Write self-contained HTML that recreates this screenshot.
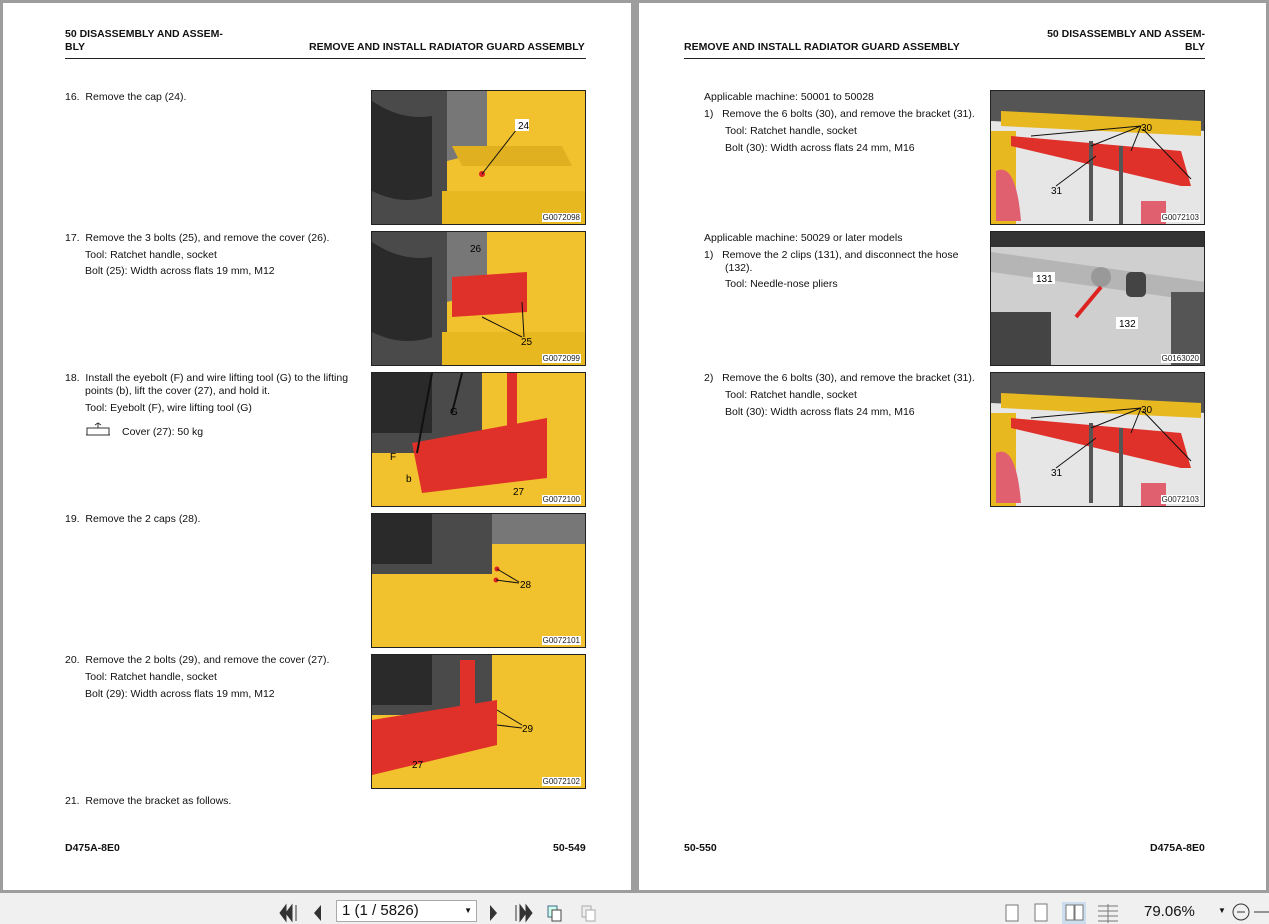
<!DOCTYPE html>
<html><head><meta charset="utf-8"><style>
*{margin:0;padding:0;box-sizing:border-box}
body{width:1269px;height:924px;background:#9d9d9d;position:relative;overflow:hidden;font-family:"Liberation Sans",sans-serif;color:#111}
.pg{position:absolute;top:3px;height:887px;background:#fff}
.t{position:absolute;font-size:10.5px;line-height:16px;white-space:nowrap;margin-top:2px}
.h{position:absolute;font-size:10.5px;font-weight:bold;line-height:13px}
.im{position:absolute;width:215px;height:135px;border:1px solid #222;overflow:hidden}
.im svg{display:block}
.cap{position:absolute;right:4px;bottom:2px;font-size:8px;background:#fff;padding:0 1px;color:#222}
.rule{position:absolute;height:1px;background:#222}
.tb{position:absolute;left:0;top:893px;width:1269px;height:31px;background:#f0f0f0}
</style></head><body>
<div class="pg" style="left:3px;width:628px"></div>
<div class="pg" style="left:639px;width:627px"></div>

<div class="h" style="left:65px;top:28px">50 DISASSEMBLY AND ASSEM-<br>BLY</div>
<div class="h" style="left:309px;top:41px">REMOVE AND INSTALL RADIATOR GUARD ASSEMBLY</div>
<div class="rule" style="left:65px;top:58px;width:521px"></div>

<div class="t" style="left:65px;top:87px">16.&nbsp; Remove the cap (24).</div>
<div class="t" style="left:65px;top:228px">17.&nbsp; Remove the 3 bolts (25), and remove the cover (26).</div>
<div class="t" style="left:85px;top:245px">Tool: Ratchet handle, socket</div>
<div class="t" style="left:85px;top:261px">Bolt (25): Width across flats 19 mm, M12</div>
<div class="t" style="left:65px;top:368px">18.&nbsp; Install the eyebolt (F) and wire lifting tool (G) to the lifting</div>
<div class="t" style="left:85px;top:381px">points (b), lift the cover (27), and hold it.</div>
<div class="t" style="left:85px;top:398px">Tool: Eyebolt (F), wire lifting tool (G)</div>
<svg style="position:absolute;left:85px;top:422px" width="26" height="14"><path d="M1 13h24M2 13V6h22v7M13 1v5M10 3l3-2 3 2" fill="none" stroke="#333" stroke-width="1"/></svg>
<div class="t" style="left:122px;top:422px">Cover (27): 50 kg</div>
<div class="t" style="left:65px;top:509px">19.&nbsp; Remove the 2 caps (28).</div>
<div class="t" style="left:65px;top:650px">20.&nbsp; Remove the 2 bolts (29), and remove the cover (27).</div>
<div class="t" style="left:85px;top:667px">Tool: Ratchet handle, socket</div>
<div class="t" style="left:85px;top:684px">Bolt (29): Width across flats 19 mm, M12</div>
<div class="t" style="left:65px;top:791px">21.&nbsp; Remove the bracket as follows.</div>
<div class="h" style="left:65px;top:842px">D475A-8E0</div>
<div class="h" style="left:553px;top:842px">50-549</div>

<div class="im" style="left:371px;top:90px"><svg width="215" height="135"><rect width="215" height="135" fill="#f2c12e"/><path d="M0 0h75v135H0z" fill="#4a4a4a"/><path d="M0 10q30 20 60 15v80q-30 10-60-5z" fill="#2a2a2a"/><path d="M75 0l40 0 0 60-40 10z" fill="#777"/><path d="M80 55h110l10 20H90z" fill="#e0b020"/><path d="M70 100h145v35H70z" fill="#e8b820"/><circle cx="110" cy="83" r="3" fill="#d22"/><path d="M110 83l35-45" stroke="#111"/><rect x="143" y="28" width="14" height="12" fill="#fff"/><text x="146" y="38" font-size="10" font-family="Liberation Sans">24</text></svg><div class="cap">G0072098</div></div>
<div class="im" style="left:371px;top:231px"><svg width="215" height="135"><rect width="215" height="135" fill="#f2c12e"/><path d="M0 0h75v135H0z" fill="#4a4a4a"/><path d="M0 10q30 20 60 15v80q-30 10-60-5z" fill="#2a2a2a"/><path d="M75 0h40v60l-40 10z" fill="#777"/><path d="M80 45l75-5v40l-75 5z" fill="#e0302a"/><path d="M70 100h145v35H70z" fill="#e8b820"/><path d="M110 85l40 20M150 70l2 35" stroke="#111"/><text x="98" y="20" font-size="10" font-family="Liberation Sans">26</text><text x="149" y="113" font-size="10" font-family="Liberation Sans">25</text></svg><div class="cap">G0072099</div></div>
<div class="im" style="left:371px;top:372px"><svg width="215" height="135"><rect width="215" height="135" fill="#f2c12e"/><path d="M0 0h110v80H0z" fill="#4a4a4a"/><path d="M0 0h60v60H0z" fill="#2a2a2a"/><path d="M40 70l135-25v60L50 120z" fill="#e0302a"/><path d="M135 0h10v60h-10z" fill="#e0302a"/><path d="M60 0l-15 80M90 0l-10 40" stroke="#111" stroke-width="2"/><text x="78" y="42" font-size="10" font-family="Liberation Sans">G</text><text x="18" y="87" font-size="10" font-family="Liberation Sans">F</text><text x="34" y="109" font-size="10" font-family="Liberation Sans">b</text><text x="141" y="122" font-size="10" font-family="Liberation Sans">27</text></svg><div class="cap">G0072100</div></div>
<div class="im" style="left:371px;top:513px"><svg width="215" height="135"><rect width="215" height="135" fill="#f2c12e"/><path d="M0 0h120v60H0z" fill="#4a4a4a"/><path d="M0 0h60v50H0z" fill="#2a2a2a"/><path d="M120 0h95v30H120z" fill="#777"/><circle cx="125" cy="55" r="2.5" fill="#d22"/><circle cx="124" cy="66" r="2.5" fill="#d22"/><path d="M125 55l22 13M124 66l23 3" stroke="#111"/><text x="148" y="74" font-size="10" font-family="Liberation Sans">28</text></svg><div class="cap">G0072101</div></div>
<div class="im" style="left:371px;top:654px"><svg width="215" height="135"><rect width="215" height="135" fill="#f2c12e"/><path d="M0 0h120v60H0z" fill="#4a4a4a"/><path d="M0 0h60v50H0z" fill="#2a2a2a"/><path d="M0 65l125-20v45L0 120z" fill="#e0302a"/><path d="M88 5h15v50H88z" fill="#e0302a"/><path d="M125 55l25 15M125 70l25 3" stroke="#111"/><text x="150" y="77" font-size="10" font-family="Liberation Sans">29</text><text x="40" y="113" font-size="10" font-family="Liberation Sans">27</text></svg><div class="cap">G0072102</div></div>

<div class="h" style="left:684px;top:41px">REMOVE AND INSTALL RADIATOR GUARD ASSEMBLY</div>
<div class="h" style="left:1046px;top:28px;text-align:right;width:159px">50 DISASSEMBLY AND ASSEM-<br>BLY</div>
<div class="rule" style="left:684px;top:58px;width:521px"></div>

<div class="t" style="left:704px;top:87px">Applicable machine: 50001 to 50028</div>
<div class="t" style="left:704px;top:104px">1)&nbsp;&nbsp; Remove the 6 bolts (30), and remove the bracket (31).</div>
<div class="t" style="left:725px;top:121px">Tool: Ratchet handle, socket</div>
<div class="t" style="left:725px;top:138px">Bolt (30): Width across flats 24 mm, M16</div>
<div class="t" style="left:704px;top:228px">Applicable machine: 50029 or later models</div>
<div class="t" style="left:704px;top:245px">1)&nbsp;&nbsp; Remove the 2 clips (131), and disconnect the hose</div>
<div class="t" style="left:725px;top:258px">(132).</div>
<div class="t" style="left:725px;top:274px">Tool: Needle-nose pliers</div>
<div class="t" style="left:704px;top:368px">2)&nbsp;&nbsp; Remove the 6 bolts (30), and remove the bracket (31).</div>
<div class="t" style="left:725px;top:385px">Tool: Ratchet handle, socket</div>
<div class="t" style="left:725px;top:402px">Bolt (30): Width across flats 24 mm, M16</div>
<div class="h" style="left:684px;top:842px">50-550</div>
<div class="h" style="left:1150px;top:842px">D475A-8E0</div>

<div class="im" style="left:990px;top:90px"><svg width="215" height="135"><rect width="215" height="135" fill="#e6e6e6"/><path d="M0 0h215v40L0 30z" fill="#555"/><path d="M10 20l200 10v15L10 35z" fill="#e8b820"/><path d="M0 40h25v95H0z" fill="#e8b820"/><path d="M20 45l170 15 10 35h-10L20 55z" fill="#e0302a"/><path d="M5 80q20-10 25 50H5z" fill="#e06070"/><path d="M150 110h25v25h-25z" fill="#e06070"/><path d="M100 50l0 80M130 55l0 80" stroke="#555" stroke-width="4"/><text x="150" y="40" font-size="10" font-family="Liberation Sans">30</text><text x="60" y="103" font-size="10" font-family="Liberation Sans">31</text><path d="M150 35l-110 10M150 35l-50 20M150 35l-10 25M152 38l48 50M65 95l40-30" stroke="#111"/></svg><div class="cap">G0072103</div></div>
<div class="im" style="left:990px;top:231px"><svg width="215" height="135"><rect width="215" height="135" fill="#cfcfcf"/><path d="M0 0h215v15H0z" fill="#333"/><path d="M0 20l215 30v20L0 40z" fill="#b5b5b5"/><path d="M0 80h60v55H0z" fill="#444"/><path d="M180 60h35v75h-35z" fill="#555"/><circle cx="110" cy="45" r="10" fill="#999"/><rect x="135" y="40" width="20" height="25" rx="5" fill="#444"/><path d="M110 55l-25 30" stroke="#d22" stroke-width="4"/><rect x="42" y="40" width="22" height="12" fill="#fff"/><text x="45" y="50" font-size="10" font-family="Liberation Sans">131</text><rect x="125" y="85" width="22" height="12" fill="#fff"/><text x="128" y="95" font-size="10" font-family="Liberation Sans">132</text></svg><div class="cap">G0163020</div></div>
<div class="im" style="left:990px;top:372px"><svg width="215" height="135"><rect width="215" height="135" fill="#e6e6e6"/><path d="M0 0h215v40L0 30z" fill="#555"/><path d="M10 20l200 10v15L10 35z" fill="#e8b820"/><path d="M0 40h25v95H0z" fill="#e8b820"/><path d="M20 45l170 15 10 35h-10L20 55z" fill="#e0302a"/><path d="M5 80q20-10 25 50H5z" fill="#e06070"/><path d="M150 110h25v25h-25z" fill="#e06070"/><path d="M100 50l0 80M130 55l0 80" stroke="#555" stroke-width="4"/><text x="150" y="40" font-size="10" font-family="Liberation Sans">30</text><text x="60" y="103" font-size="10" font-family="Liberation Sans">31</text><path d="M150 35l-110 10M150 35l-50 20M150 35l-10 25M152 38l48 50M65 95l40-30" stroke="#111"/></svg><div class="cap">G0072103</div></div>

<div class="tb"></div>
<svg style="position:absolute;left:278px;top:903px" width="260" height="20">
<path d="M8 2l-6 8 6 8zM14 2l-6 8 6 8zM18 2v16" fill="#333" stroke="#333"/>
<path d="M43 2l-7 8 7 8z" fill="#333"/>
</svg>
<div style="position:absolute;left:336px;top:900px;width:141px;height:22px;background:#fff;border:1px solid #aaa;font-size:15px;line-height:20px;padding-left:5px">1 (1 / 5826)<span style="position:absolute;right:4px;top:0;font-size:8px">▼</span></div>
<svg style="position:absolute;left:486px;top:903px" width="120" height="20">
<path d="M4 2l7 8-7 8z" fill="#333"/><path d="M30 2v16M34 2l6 8-6 8zM40 2l6 8-6 8z" fill="#333" stroke="#333"/>
<rect x="62" y="3" width="9" height="11" fill="#cfe" stroke="#468"/><rect x="66" y="7" width="9" height="11" fill="#fff" stroke="#444"/>
<rect x="96" y="3" width="9" height="11" fill="#eee" stroke="#aaa"/><rect x="100" y="7" width="9" height="11" fill="#fff" stroke="#aaa"/>
</svg>
<svg style="position:absolute;left:1000px;top:902px" width="130" height="22">
<rect x="6" y="3" width="12" height="16" fill="#fff" stroke="#777"/>
<rect x="35" y="2" width="12" height="17" fill="#fff" stroke="#777"/>
<rect x="62" y="0" width="24" height="22" fill="#cde"/><rect x="66" y="3" width="8" height="15" fill="#fff" stroke="#777"/><rect x="75" y="3" width="8" height="15" fill="#fff" stroke="#777"/>
<path d="M98 4h20M98 9h20M98 14h20M98 19h20M108 2v19" stroke="#777"/>
</svg>
<div style="position:absolute;left:1144px;top:903px;font-size:15px">79.06%</div>
<div style="position:absolute;left:1218px;top:906px;font-size:8px">▼</div>
<svg style="position:absolute;left:1230px;top:901px" width="39" height="22"><circle cx="11" cy="11" r="8" fill="none" stroke="#333"/><path d="M7 11h8M24 11h15" stroke="#333"/></svg>
</body></html>
